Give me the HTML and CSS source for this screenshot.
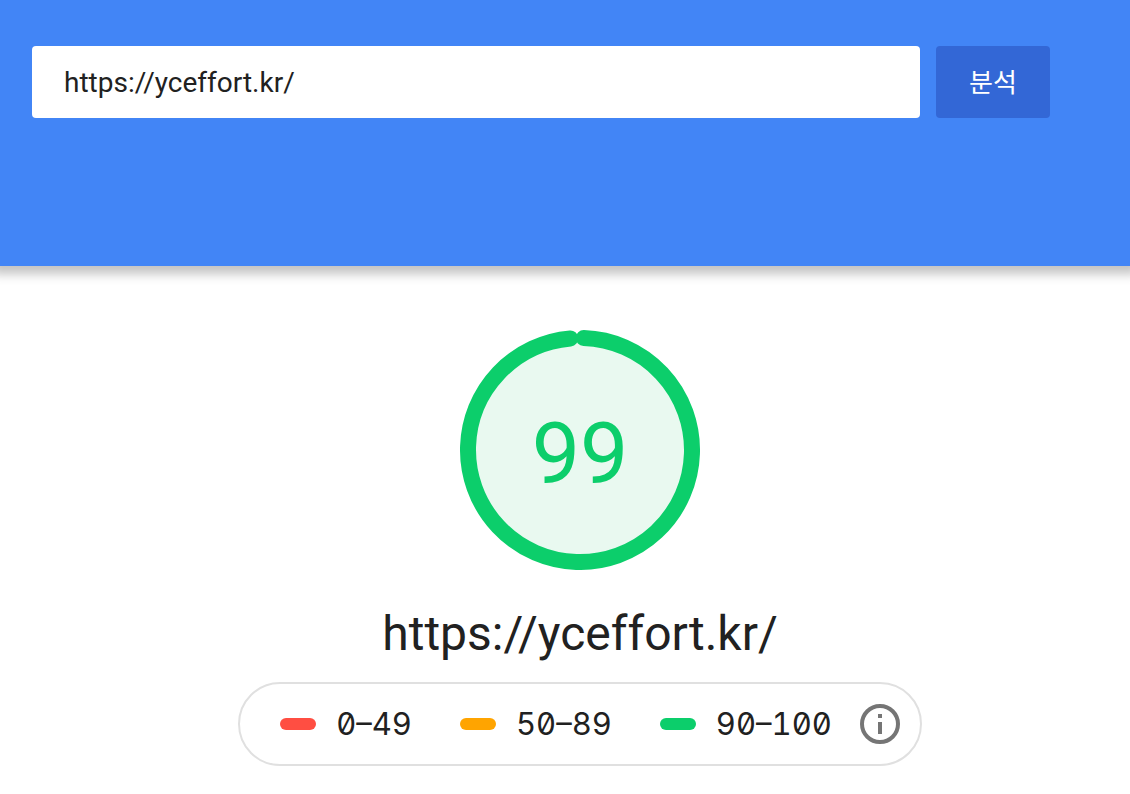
FILE: index.html
```html
<!DOCTYPE html>
<html lang="ko">
<head>
<meta charset="utf-8">
<meta name="viewport" content="width=device-width, initial-scale=1">
<title>https://yceffort.kr/</title>
<link rel="stylesheet" href="styles.css">
</head>
<body>
<header class="topbar">
  <form class="search">
    <input class="url-input" type="text" aria-label="URL" value="https://yceffort.kr/">
    <button class="analyze" type="button">분석</button>
  </form>
</header>
<main class="report">
  <div class="gauge">
    <svg class="gauge-ring" viewBox="0 0 240 240" aria-hidden="true">
      <circle class="gauge-base" cx="120" cy="120" r="112"/>
      <circle class="gauge-arc" cx="120" cy="120" r="112" stroke-dasharray="689.5 703.7" transform="rotate(-88.1 120 120)"/>
    </svg>
    <div class="gauge-score">99</div>
  </div>
  <h1 class="site">https://yceffort.kr/</h1>
  <div class="scale">
    <ul class="ranges">
      <li class="range range-fail">0–49</li>
      <li class="range range-average">50–89</li>
      <li class="range range-pass">90–100</li>
    </ul>
    <button class="info" type="button" aria-label="Info">
      <svg class="info-icon" viewBox="0 0 40 40" aria-hidden="true">
        <circle cx="20" cy="20" r="18" fill="none" stroke="currentColor" stroke-width="4"/>
        <path d="M18 10h4v4h-4zM18 18h4v12h-4z" fill="currentColor"/>
      </svg>
    </button>
  </div>
</main>
</body>
</html>
```

FILE: styles.css
```css
* {
  box-sizing: border-box;
}

body {
  margin: 0;
  background: #fff;
  color: #212121;
  font-family: Roboto, "Noto Sans CJK KR", sans-serif;
}

.topbar {
  padding: 46px 80px 148px 32px;
  background: #4285f6;
  box-shadow: 0 0 10px 8px rgba(0, 0, 0, 0.24);
}

.search {
  display: flex;
  gap: 16px;
}

.url-input,
.analyze {
  height: 72px;
  padding: 0 32px;
  border: 0;
  border-radius: 4px;
  font: inherit;
}

.url-input {
  flex: 1;
  min-width: 0;
  background: #fff;
  color: #212121;
  font-size: 28px;
}

.analyze {
  min-width: 114px;
  padding-bottom: 4px;
  background: #3367d6;
  color: #fff;
  font-size: 26px;
}

.report {
  display: flex;
  flex-direction: column;
  align-items: center;
  padding: 64px 0 28px 30px;
}

.gauge {
  display: grid;
  place-items: center;
}

.gauge-ring,
.gauge-score {
  grid-area: 1 / 1;
}

.gauge-ring {
  width: 240px;
  height: 240px;
}

.gauge-base {
  fill: #e9f9f0;
}

.gauge-arc {
  fill: none;
  stroke: #0cce6b;
  stroke-width: 16;
  stroke-linecap: round;
}

.gauge-score {
  padding-top: 8px;
  color: #0cce6b;
  font-size: 86px;
  line-height: 96px;
}

.site {
  margin: 32px 0 16px;
  font-size: 48px;
  font-weight: 400;
  line-height: 64px;
}

.scale {
  display: flex;
  align-items: center;
  gap: 28px;
  padding: 20px 20px 20px 40px;
  border: 2px solid #e0e0e0;
  border-radius: 42px;
}

.ranges {
  display: flex;
  gap: 48px;
  margin: 0;
  padding: 0;
  list-style: none;
}

.range {
  display: flex;
  align-items: center;
  gap: 20px;
  font-family: Inter, "Liberation Mono", monospace;
  font-size: 31px;
  line-height: 40px;
  font-feature-settings: "zero", "tnum";
}

.range::before {
  content: "";
  width: 36px;
  height: 12px;
  border-radius: 6px;
  background: currentColor;
}

.range-fail::before {
  background: #ff4e42;
}

.range-average::before {
  background: #ffa400;
}

.range-pass::before {
  background: #0cce6b;
}

.info {
  padding: 0;
  border: 0;
  background: none;
  color: #757575;
}

.info-icon {
  display: block;
  width: 40px;
  height: 40px;
}
```
